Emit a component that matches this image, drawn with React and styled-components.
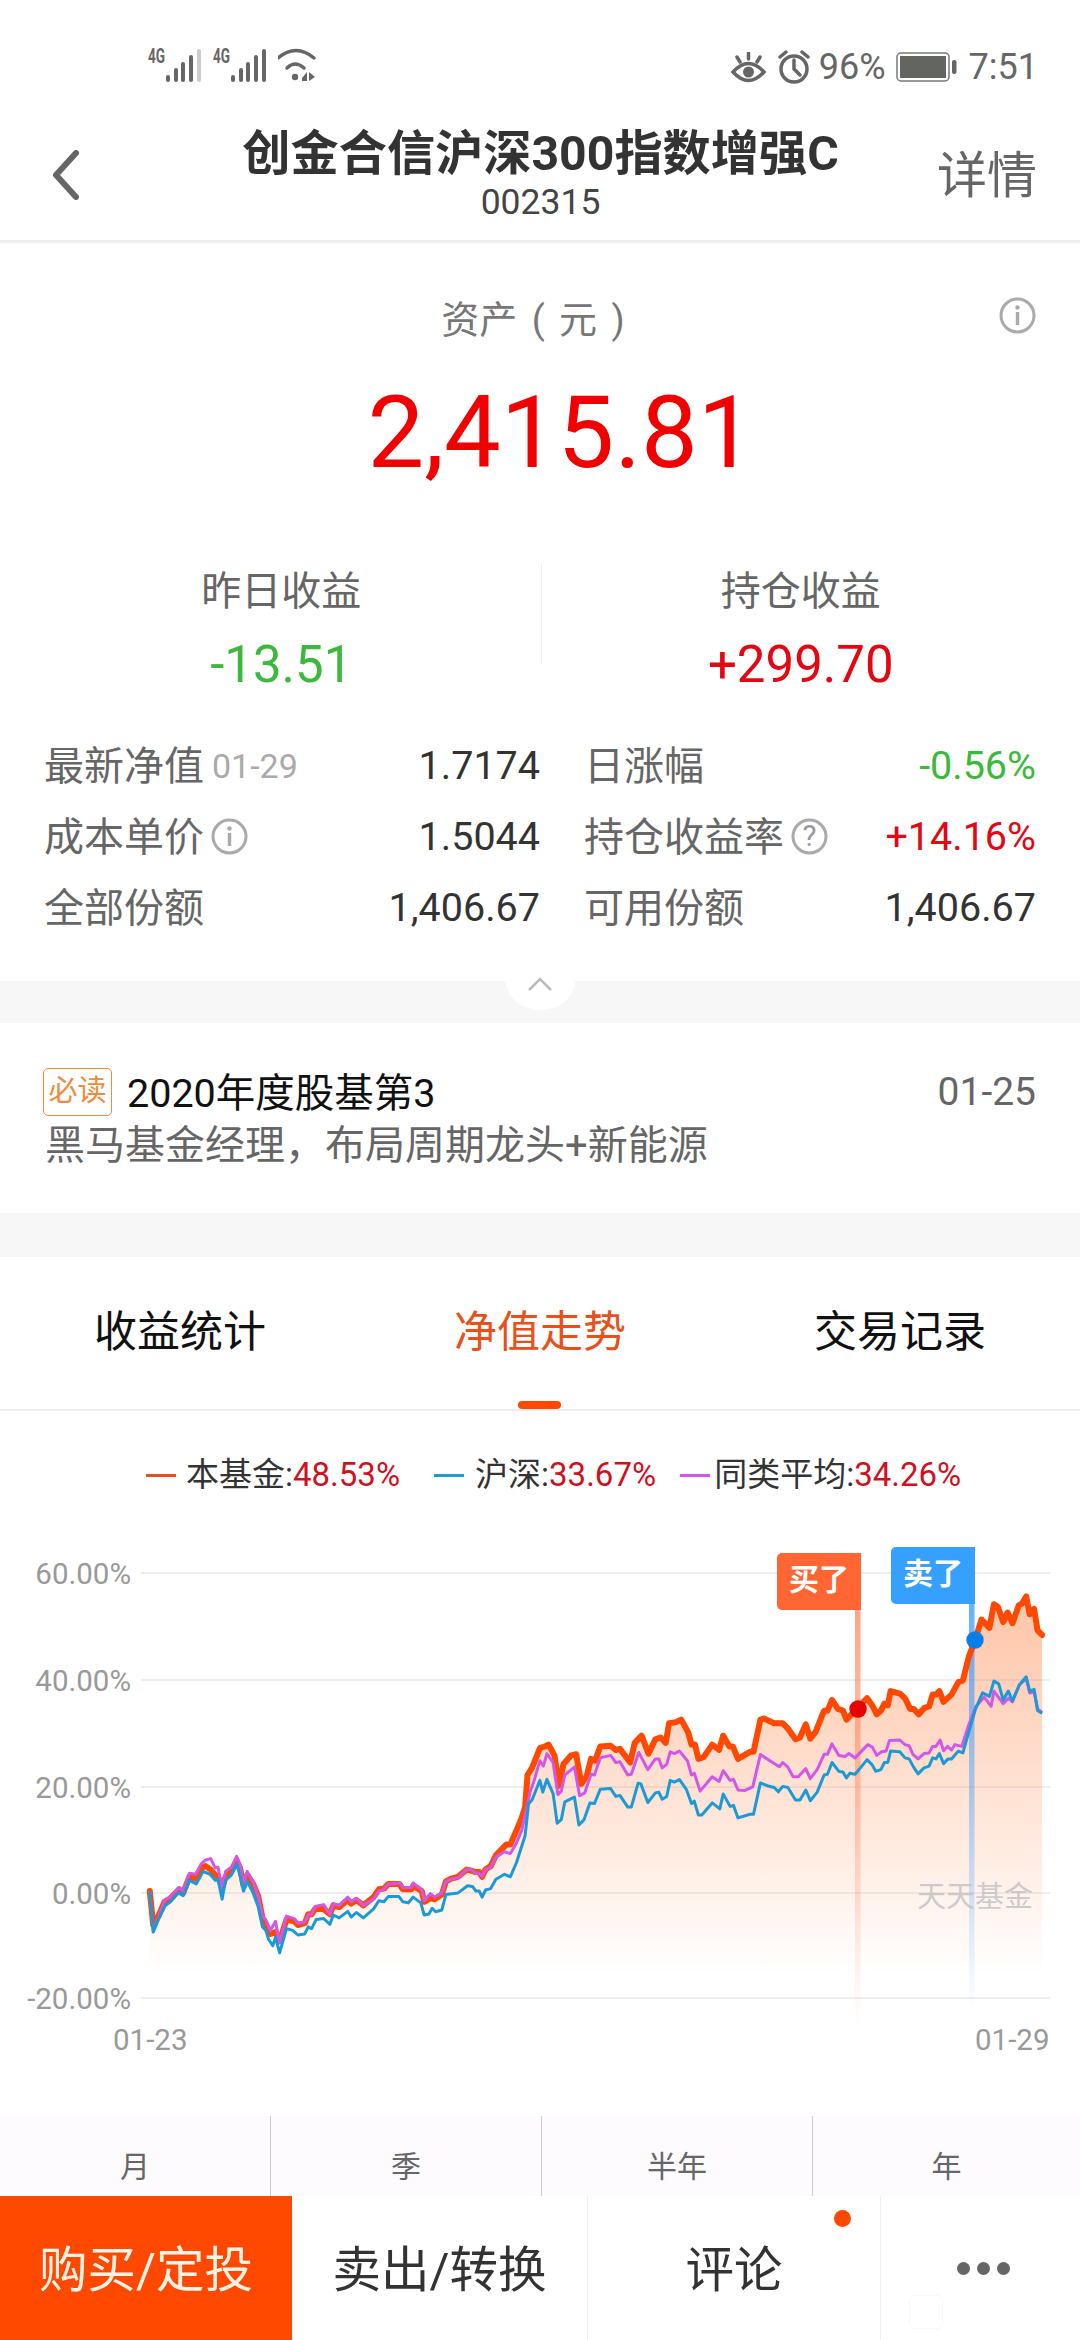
import React from 'react';
import styled, { createGlobalStyle } from 'styled-components';

const ORANGE = '#ff4800';
const RED = '#e30613';
const GREEN = '#3cb93c';

const STATS = [
  { label: '最新净值', date: '01-29', value: '1.7174' },
  { label: '日涨幅', value: '-0.56%', color: GREEN },
  { label: '成本单价', icon: 'i', value: '1.5044' },
  { label: '持仓收益率', icon: '?', value: '+14.16%', color: RED },
  { label: '全部份额', value: '1,406.67' },
  { label: '可用份额', value: '1,406.67' },
];

const LEGEND = [
  { name: '本基金', value: '48.53%', color: '#e8501a', gap: 10, left: 0 },
  { name: '沪深', value: '33.67%', color: '#1a9ad6', gap: 11, left: 34 },
  { name: '同类平均', value: '34.26%', color: '#d257e8', gap: 4, left: 24 },
];

const GRID = [
  { y: 1573, label: '60.00%' },
  { y: 1680, label: '40.00%' },
  { y: 1787, label: '20.00%' },
  { y: 1893, label: '0.00%' },
  { y: 1998, label: '-20.00%' },
];

// traced from the two halves of the chart, in crop coordinates
const ORANGE_L = '435,1095 445,1190 460,1165 478,1125 495,1115 520,1090 532,1100 550,1055 568,1060 585,1030 597,1025 612,1035 625,1050 633,1055 645,1085 655,1055 672,1040 687,1010 697,1030 707,1080 718,1050 735,1075 750,1110 762,1170 772,1190 785,1215 800,1210 812,1235 832,1175 855,1180 865,1190 885,1185 895,1160 905,1160 915,1145 940,1145 958,1160 968,1135 985,1140 1010,1120 1020,1130 1035,1120 1055,1135 1085,1112 1100,1090 1115,1088 1128,1075 1160,1075 1170,1090 1195,1090 1200,1080 1225,1095 1232,1125 1250,1115 1262,1118 1283,1105 1295,1068 1310,1060 1330,1055 1355,1035 1370,1038 1380,1042 1392,1042 1400,1055 1410,1035 1425,1025 1440,995 1470,965 1482,965 1500,925 1515,890 1525,860 1532,770 1545,750 1568,695';
const ORANGE_R = '15,690 25,685 42,715 55,800 68,740 90,715 105,712 120,795 135,775 148,725 160,730 175,690 205,688 220,700 232,697 262,735 275,680 295,660 315,710 335,670 350,665 365,680 375,625 395,622 410,615 430,650 440,685 450,685 460,725 475,720 500,685 520,700 532,660 550,690 560,690 575,725 610,705 620,705 640,615 650,612 680,625 705,625 720,640 742,670 755,665 772,628 785,668 800,650 825,590 835,590 848,560 865,585 880,590 890,615 905,600 925,580 950,555 965,575 978,600 990,590 1000,570 1010,575 1018,535 1045,542 1060,555 1075,585 1085,585 1100,600 1115,583 1130,578 1140,545 1150,545 1160,535 1172,565 1195,545 1215,510 1228,505 1245,440 1262,395 1282,335 1305,358 1318,292 1330,300 1345,342 1358,315 1372,345 1390,295 1400,290 1412,270 1422,320 1435,305 1445,365 1458,378';
const PURPLE_L = '435,1095 445,1205 460,1170 478,1120 495,1112 520,1085 532,1095 550,1045 568,1048 585,1018 597,1008 612,1004 625,1030 633,1028 645,1090 655,1040 672,1028 687,998 697,1020 707,1075 718,1040 735,1070 750,1110 762,1165 772,1175 785,1205 800,1180 812,1240 832,1165 855,1172 865,1185 885,1182 895,1162 905,1160 915,1138 940,1133 958,1160 968,1130 985,1135 1010,1112 1020,1125 1035,1115 1055,1135 1085,1118 1100,1095 1115,1090 1128,1075 1160,1072 1170,1085 1195,1085 1200,1072 1225,1092 1232,1122 1250,1102 1262,1112 1283,1100 1295,1068 1310,1062 1330,1058 1355,1035 1370,1035 1380,1045 1392,1045 1400,1055 1410,1035 1425,1028 1440,1000 1465,985 1482,990 1500,960 1515,925 1530,860 1540,815 1550,790 1568,730';
const PURPLE_R = '10,745 20,710 38,735 52,825 62,815 72,770 100,748 115,828 130,820 148,768 158,770 175,722 205,715 220,735 232,733 255,770 265,768 287,707 313,755 335,725 345,725 355,750 368,740 378,705 390,710 405,703 428,730 440,770 448,765 465,815 500,775 520,788 532,758 552,785 562,782 575,812 595,813 618,803 640,713 680,738 695,747 705,735 720,748 735,775 750,775 772,752 785,780 805,755 825,712 835,712 848,683 868,715 885,718 897,710 915,722 952,685 965,692 978,715 992,705 1005,703 1015,673 1045,672 1060,685 1072,688 1083,712 1098,725 1115,710 1130,708 1140,690 1150,690 1162,672 1172,702 1183,690 1195,700 1205,685 1225,690 1245,630 1265,580 1290,552 1310,578 1318,535 1345,570 1360,555 1372,565 1392,518 1412,500 1422,540 1435,538 1445,585 1458,595';
const BLUE_L = '435,1095 445,1210 460,1175 480,1135 495,1125 518,1100 532,1108 550,1065 570,1075 590,1040 610,1048 625,1065 633,1062 645,1118 655,1065 672,1050 687,1020 697,1050 707,1095 718,1068 735,1100 750,1140 762,1195 772,1205 780,1230 792,1248 800,1225 812,1268 832,1200 850,1205 865,1218 885,1215 895,1195 905,1200 918,1175 940,1172 958,1188 968,1162 985,1170 1010,1152 1020,1168 1035,1155 1055,1170 1085,1145 1100,1122 1115,1125 1128,1110 1158,1110 1170,1125 1185,1128 1200,1112 1222,1128 1232,1162 1245,1160 1255,1143 1265,1153 1283,1148 1295,1105 1330,1100 1358,1080 1372,1082 1382,1095 1392,1095 1400,1112 1410,1092 1425,1088 1440,1062 1465,1048 1482,1055 1500,1015 1525,940 1535,850 1545,840 1568,785';
const BLUE_R = '8,818 20,782 38,822 50,905 62,895 72,845 100,832 113,910 128,895 145,848 158,850 175,810 205,808 220,830 232,827 255,860 265,860 285,793 293,795 313,847 335,820 345,818 355,838 368,830 378,785 390,790 405,783 425,810 440,850 448,843 460,882 470,882 500,848 522,865 532,823 552,858 562,855 575,890 610,880 620,880 640,792 660,800 680,805 692,817 705,802 720,805 742,840 755,840 772,812 785,842 805,818 825,770 835,768 848,735 868,760 880,762 890,778 900,765 915,768 950,727 965,742 975,760 990,755 1000,735 1010,735 1018,703 1045,705 1060,722 1072,725 1085,748 1098,767 1115,750 1130,745 1140,722 1150,725 1160,710 1172,738 1185,725 1195,725 1215,703 1228,708 1245,650 1265,585 1285,540 1305,550 1318,507 1332,515 1345,560 1360,535 1372,562 1392,518 1412,495 1422,535 1435,530 1445,590 1458,597';

const SCALE_X = 2.904;
const SCALE_Y = 2.8;

const toPath = (left, right) => {
  const read = (text, offset) =>
    text.split(' ').map((pair) => {
      const [x, y] = pair.split(',').map(Number);
      return `${(offset + x / SCALE_X).toFixed(1)},${(1500 + y / SCALE_Y).toFixed(1)}`;
    });
  return [...read(left, 0), ...read(right, 540)].join(' ');
};

const ORANGE_LINE = toPath(ORANGE_L, ORANGE_R);
const PURPLE_LINE = toPath(PURPLE_L, PURPLE_R);
const BLUE_LINE = toPath(BLUE_L, BLUE_R);

const GlobalStyle = createGlobalStyle`
  html, body {
    margin: 0;
    padding: 0;
    background: #ffffff;
  }

  body {
    font-family: Roboto, "Noto Sans CJK SC", sans-serif;
  }
`;

const Page = styled.div`
  position: relative;
  width: 1080px;
  height: 2340px;
  overflow: hidden;
  background: #ffffff;
  display: flex;
  flex-direction: column;
`;

const StatusBar = styled.div`
  height: 100px;
  display: flex;
  align-items: flex-start;
  padding: 42px 42px 0 148px;
  box-sizing: border-box;
  color: #666666;
`;

const StatusLeft = styled.div`
  display: flex;
  align-items: center;
  gap: 10px;
  height: 42px;
`;

const StatusRight = styled.div`
  display: flex;
  align-items: center;
  gap: 9px;
  height: 36px;
  margin: 7px 0 0 auto;
`;

const StatusText = styled.span`
  font-size: 36px;
  line-height: 36px;
`;

const SignalLabel = styled.text`
  font-family: Roboto, sans-serif;
  font-size: 21px;
  font-weight: 700;
  fill: #666666;
`;

const Header = styled.header`
  height: 143px;
  box-sizing: border-box;
  border-bottom: 3px solid #eeeeee;
  display: grid;
  grid-template-columns: 1fr auto 1fr;
  padding: 0 43px 0 44px;
`;

const BackCell = styled.div`
  padding: 50px 0 0 8px;
`;

const TitleBlock = styled.div`
  text-align: center;
  padding-top: 26px;
`;

const Title = styled.div`
  font-size: 48.2px;
  line-height: 56px;
  font-weight: 700;
  color: #333333;
`;

const FundCode = styled.div`
  font-size: 35.5px;
  line-height: 40px;
  color: #444444;
`;

const DetailLink = styled.div`
  justify-self: end;
  padding-top: 46px;
  font-size: 50px;
  line-height: 60px;
  color: #666666;
`;

const Summary = styled.section`
  height: 738px;
  box-sizing: border-box;
  padding-top: 54px;
`;

const AssetHead = styled.div`
  display: grid;
  grid-template-columns: 1fr auto 1fr;
  padding-right: 44px;
`;

const AssetLabel = styled.div`
  grid-column: 2;
  font-size: 38px;
  line-height: 46px;
  word-spacing: 5px;
  color: #777777;
  margin-left: 30px;
`;

const AssetInfo = styled.div`
  grid-column: 3;
  justify-self: end;
  height: 37px;
`;

const AssetValue = styled.div`
  margin-top: 30px;
  padding-left: 42px;
  text-align: center;
  font-size: 101px;
  line-height: 120px;
  color: #f10000;
`;

const Pairs = styled.div`
  display: grid;
  grid-template-columns: 1fr 1px 1fr;
  padding: 0 20px 0 22px;
  margin-top: 70px;
`;

const PairCell = styled.div`
  text-align: center;
`;

const PairDivider = styled.div`
  height: 100px;
  background: #eeeeee;
`;

const PairLabel = styled.div`
  font-size: 40px;
  line-height: 58px;
  color: #666666;
`;

const PairValue = styled.div`
  font-size: 51px;
  line-height: 88px;
  color: ${(props) => props.$color};
`;

const StatsGrid = styled.div`
  display: grid;
  grid-template-columns: 495px 451px;
  grid-auto-rows: 71px;
  column-gap: 45px;
  padding: 0 44px 0 45px;
  margin-top: 21px;
`;

const StatRow = styled.div`
  display: flex;
  align-items: center;
`;

const StatLabel = styled.span`
  font-size: 40px;
  color: #666666;
  margin: 0 0 5px -1px;
`;

const StatDate = styled.span`
  font-size: 34px;
  color: #aaaaaa;
  margin-left: 8px;
`;

const StatIcon = styled.span`
  display: flex;
  margin-left: 7px;
`;

const StatValue = styled.span`
  margin-left: auto;
  font-size: 39.5px;
  color: ${(props) => props.$color || '#333333'};
`;

const GapBand = styled.div`
  position: relative;
  flex: none;
  height: ${(props) => props.$height}px;
  background: #f7f7f7;
`;

const CollapseTab = styled.div`
  position: absolute;
  top: 0;
  left: 506px;
  width: 69px;
  height: 29px;
  background: #ffffff;
  border-radius: 0 0 35px 35px / 0 0 29px 29px;
`;

const CollapseChevron = styled.svg`
  position: absolute;
  top: -5px;
  left: 20px;
`;

const Notice = styled.section`
  height: 190px;
  box-sizing: border-box;
  padding: 45px 44px 0 43px;
`;

const NoticeHead = styled.div`
  display: flex;
  align-items: center;
  height: 48px;
`;

const ReadBadge = styled.span`
  width: 69px;
  height: 48px;
  box-sizing: border-box;
  border: 1.5px solid #f08a3c;
  border-radius: 5px;
  color: #f08a3c;
  font-size: 29px;
  line-height: 44px;
  text-align: center;
`;

const NoticeTitle = styled.span`
  font-size: 39.5px;
  color: #111111;
  margin: 0 0 5px 15px;
`;

const NoticeDate = styled.span`
  margin-left: auto;
  font-size: 39px;
  color: #666666;
`;

const NoticeText = styled.div`
  margin: 5px 0 0 2px;
  font-size: 40px;
  line-height: 50px;
  color: #666666;
`;

const TabBar = styled.nav`
  height: 154px;
  box-sizing: border-box;
  border-bottom: 2px solid #eeeeee;
  display: grid;
  grid-template-columns: repeat(3, 1fr);
`;

const Tab = styled.div`
  position: relative;
  text-align: center;
  font-size: 43px;
  line-height: 150px;
  color: ${(props) => (props.$active ? '#e8501a' : '#111111')};

  ${(props) =>
    props.$active &&
    `
    &::after {
      content: '';
      position: absolute;
      left: 158px;
      bottom: 0;
      width: 43px;
      height: 8px;
      border-radius: 4px;
      background: ${ORANGE};
    }
  `}
`;

const Legend = styled.div`
  display: flex;
  align-items: center;
  height: 40px;
  padding: 44px 0 0 146px;
`;

const LegendItem = styled.div`
  display: flex;
  align-items: center;
  margin-left: ${(props) => props.$left}px;
  gap: ${(props) => props.$gap}px;
  font-size: 33px;
  line-height: 40px;
  color: #333333;
`;

const LegendSwatch = styled.span`
  width: 30px;
  height: 3px;
  background: ${(props) => props.$color};
`;

const LegendValue = styled.span`
  color: #d0101e;
`;

const ChartCanvas = styled.div`
  position: relative;
  flex: none;
  height: 621px;
`;

const ChartSvg = styled.svg`
  display: block;
`;

const AxisText = styled.text`
  font-family: Roboto, sans-serif;
  font-size: 29.5px;
  fill: #999999;
`;

const Watermark = styled.text`
  font-family: "Noto Sans CJK SC", sans-serif;
  font-size: 29px;
  fill: #c4c4c4;
  fill-opacity: 0.85;
`;

const TradeTag = styled.div`
  position: absolute;
  left: ${(props) => props.$left}px;
  top: ${(props) => props.$top}px;
  width: 84px;
  height: 57px;
  border-radius: 5px 0 0 5px;
  background: ${(props) => props.$color};
  color: #ffffff;
  font-size: 30px;
  font-weight: 700;
  line-height: 54px;
  text-align: center;
`;

const PeriodBar = styled.div`
  flex: none;
  height: 80px;
  display: grid;
  grid-template-columns: 270px 271px 271px 1fr;
  background: #fdfbfe;
`;

const PeriodCell = styled.div`
  border-left: ${(props) => (props.$first ? 'none' : '1px solid #cccccc')};
  text-align: center;
  font-size: 30px;
  line-height: 102px;
  color: #666666;
`;

const ActionBar = styled.div`
  flex: none;
  height: 144px;
  display: grid;
  grid-template-columns: 292px 295px 293px 200px;
  background: #ffffff;
`;

const ActionCell = styled.div`
  position: relative;
  display: flex;
  align-items: center;
  justify-content: center;
  box-sizing: border-box;
  padding: ${(props) => (props.$dots ? '0 0 0 6px' : '0 0 5px')};
  border-left: ${(props) => (props.$divider ? '1px solid #eeeeee' : 'none')};
  background: ${(props) => (props.$primary ? ORANGE : 'transparent')};
  color: ${(props) => (props.$primary ? '#fff3e6' : '#333333')};
  font-size: 48.5px;
  gap: 7px;
`;

const RedDot = styled.span`
  position: absolute;
  top: 14px;
  right: 29px;
  width: 17px;
  height: 17px;
  border-radius: 50%;
  background: ${ORANGE};
`;

const MoreDot = styled.span`
  width: 13px;
  height: 13px;
  border-radius: 50%;
  background: #666666;
`;

const SealMark = styled.span`
  position: absolute;
  left: 28px;
  top: 99px;
  width: 32px;
  height: 32px;
  border: 1px solid #f8f8f8;
  border-radius: 6px;
`;

function SignalIcon({ full }) {
  return (
    <svg width="55" height="42" viewBox="0 -6 55 42">
      <SignalLabel x="0" y="15" textLength="17" lengthAdjust="spacingAndGlyphs">
        4G
      </SignalLabel>
      <rect x="18" y="27" width="4" height="7" rx="2" fill="#666666" />
      <rect x="26" y="20" width="4" height="14" rx="2" fill="#666666" />
      <rect x="33" y="14" width="4" height="20" rx="2" fill="#666666" />
      <rect x="41" y="7" width="4" height="27" rx="2" fill="#666666" />
      <rect x="49" y="1" width="4" height="33" rx="2" fill={full ? '#666666' : '#cccccc'} />
    </svg>
  );
}

function WifiIcon() {
  return (
    <svg width="39" height="42" viewBox="2 -5 39 42" fill="none">
      <path d="M2 11 Q20 -4 38 11" stroke="#666666" strokeWidth="3.5" strokeLinecap="round" />
      <path d="M11 21 Q19 13 28 21" stroke="#666666" strokeWidth="3.5" strokeLinecap="round" />
      <circle cx="19" cy="30" r="3.2" fill="#666666" />
      <polygon points="26,31 31,25 31,34 26,34" fill="#666666" />
      <polygon points="33,25 39,30 33,34" fill="#666666" />
    </svg>
  );
}

function EyeIcon() {
  return (
    <svg width="38" height="31" viewBox="0 0 38 31" fill="none" stroke="#666666" strokeWidth="3.5" strokeLinecap="round">
      <path d="M2 20 Q17.5 3 33 20 Q17.5 37 2 20Z" />
      <circle cx="17.5" cy="20" r="5.5" fill="#666666" stroke="none" />
      <path d="M17.5 1 V7 M6 5 L9 10 M29 5 L26 10" />
    </svg>
  );
}

function AlarmIcon() {
  return (
    <svg width="32" height="34" viewBox="0 0 32 34" fill="none" stroke="#666666" strokeWidth="3.5" strokeLinecap="round">
      <circle cx="16" cy="19" r="13" />
      <path d="M16 10 V19 L22 25" />
      <path d="M2 7 L8 2 M30 7 L24 2" />
    </svg>
  );
}

function BatteryIcon() {
  return (
    <svg width="65" height="30" viewBox="-1 0 65 30">
      <rect x="1" y="1" width="52" height="28" rx="4" fill="none" stroke="#777777" strokeWidth="1.5" />
      <rect x="4" y="4" width="46" height="22" fill="#636561" />
      <rect x="56" y="8" width="4.5" height="14" rx="2" fill="#666666" />
    </svg>
  );
}

function BackIcon() {
  return (
    <svg width="28" height="50" viewBox="0 0 28 50" fill="none">
      <path d="M24 3 L4 25 L24 47" stroke="#666666" strokeWidth="6" strokeLinecap="round" strokeLinejoin="round" />
    </svg>
  );
}

function HintIcon({ mark }) {
  return (
    <svg width="37" height="37" viewBox="0 0 37 37" fill="none">
      <circle cx="18.5" cy="18.5" r="16.5" stroke="#aaaaaa" strokeWidth="3" />
      {mark === 'i' ? (
        <g fill="#aaaaaa">
          <circle cx="18.5" cy="10.5" r="2.2" />
          <rect x="16.8" y="15" width="3.4" height="13" />
        </g>
      ) : (
        <AxisText x="18.5" y="28" textAnchor="middle">
          ?
        </AxisText>
      )}
    </svg>
  );
}

function Chart() {
  const orangeArea = `150,1975 ${ORANGE_LINE} 1042,1975`;

  return (
    <ChartCanvas>
      <ChartSvg width="1080" height="621" viewBox="0 1495 1080 621">
        <defs>
          <linearGradient id="areaFill" gradientUnits="userSpaceOnUse" x1="0" y1="1630" x2="0" y2="1975">
            <stop offset="0" stopColor="#ff6a1f" stopOpacity="0.36" />
            <stop offset="1" stopColor="#ff6a1f" stopOpacity="0" />
          </linearGradient>
          <linearGradient id="buyFill" gradientUnits="userSpaceOnUse" x1="0" y1="1605" x2="0" y2="2025">
            <stop offset="0" stopColor="#ff6633" stopOpacity="0.6" />
            <stop offset="1" stopColor="#ff6633" stopOpacity="0" />
          </linearGradient>
          <linearGradient id="sellFill" gradientUnits="userSpaceOnUse" x1="0" y1="1600" x2="0" y2="2014">
            <stop offset="0" stopColor="#3d9eff" stopOpacity="0.8" />
            <stop offset="1" stopColor="#3d9eff" stopOpacity="0" />
          </linearGradient>
        </defs>

        {GRID.map((line) => (
          <g key={line.label}>
            <line x1="141" x2="1050" y1={line.y} y2={line.y} stroke="#eeeeee" strokeWidth="2" />
            <AxisText x="131" y={line.y + 11} textAnchor="end">
              {line.label}
            </AxisText>
          </g>
        ))}

        <AxisText x="113" y="2050">
          01-23
        </AxisText>
        <AxisText x="975" y="2050">
          01-29
        </AxisText>

        <polygon points={orangeArea} fill="url(#areaFill)" />
        <rect x="855" y="1605" width="5.5" height="420" fill="url(#buyFill)" />
        <rect x="969" y="1600" width="5.5" height="414" fill="url(#sellFill)" />

        <polyline points={ORANGE_LINE} fill="none" stroke={ORANGE} strokeWidth="6" strokeLinejoin="round" strokeLinecap="round" />
        <polyline points={PURPLE_LINE} fill="none" stroke="#d257e8" strokeWidth="3" strokeLinejoin="round" />
        <polyline points={BLUE_LINE} fill="none" stroke="#1a9ad6" strokeWidth="3" strokeLinejoin="round" />

        <circle cx="858" cy="1709" r="8.7" fill="#e60000" />
        <circle cx="975" cy="1640" r="8.7" fill="#0a7ee8" />

        <Watermark x="917" y="1907">
          天天基金
        </Watermark>
      </ChartSvg>

      <TradeTag $left={777} $top={58} $color="#ff6633">
        买了
      </TradeTag>
      <TradeTag $left={891} $top={52} $color="#35a0ff">
        卖了
      </TradeTag>
    </ChartCanvas>
  );
}

export default function App() {
  return (
    <Page>
      <GlobalStyle />

      <StatusBar>
        <StatusLeft>
          <SignalIcon />
          <SignalIcon full />
          <WifiIcon />
        </StatusLeft>
        <StatusRight>
          <EyeIcon />
          <AlarmIcon />
          <StatusText>96%</StatusText>
          <BatteryIcon />
          <StatusText>7:51</StatusText>
        </StatusRight>
      </StatusBar>

      <Header>
        <BackCell>
          <BackIcon />
        </BackCell>
        <TitleBlock>
          <Title>创金合信沪深300指数增强C</Title>
          <FundCode>002315</FundCode>
        </TitleBlock>
        <DetailLink>详情</DetailLink>
      </Header>

      <Summary>
        <AssetHead>
          <AssetLabel>资产 ( 元 )</AssetLabel>
          <AssetInfo>
            <HintIcon mark="i" />
          </AssetInfo>
        </AssetHead>
        <AssetValue>2,415.81</AssetValue>

        <Pairs>
          <PairCell>
            <PairLabel>昨日收益</PairLabel>
            <PairValue $color={GREEN}>-13.51</PairValue>
          </PairCell>
          <PairDivider />
          <PairCell>
            <PairLabel>持仓收益</PairLabel>
            <PairValue $color={RED}>+299.70</PairValue>
          </PairCell>
        </Pairs>

        <StatsGrid>
          {STATS.map((stat) => (
            <StatRow key={stat.label}>
              <StatLabel>{stat.label}</StatLabel>
              {stat.date && <StatDate>{stat.date}</StatDate>}
              {stat.icon && (
                <StatIcon>
                  <HintIcon mark={stat.icon} />
                </StatIcon>
              )}
              <StatValue $color={stat.color}>{stat.value}</StatValue>
            </StatRow>
          ))}
        </StatsGrid>
      </Summary>

      <GapBand $height={42}>
        <CollapseTab>
          <CollapseChevron width="28" height="18" viewBox="0 0 28 18" fill="none">
            <path d="M3 14 L14 3 L25 14" stroke="#bbbbbb" strokeWidth="2.5" />
          </CollapseChevron>
        </CollapseTab>
      </GapBand>

      <Notice>
        <NoticeHead>
          <ReadBadge>必读</ReadBadge>
          <NoticeTitle>2020年度股基第3</NoticeTitle>
          <NoticeDate>01-25</NoticeDate>
        </NoticeHead>
        <NoticeText>黑马基金经理，布局周期龙头+新能源</NoticeText>
      </Notice>

      <GapBand $height={44} />

      <TabBar>
        <Tab>收益统计</Tab>
        <Tab $active>净值走势</Tab>
        <Tab>交易记录</Tab>
      </TabBar>

      <Legend>
        {LEGEND.map((item) => (
          <LegendItem key={item.name} $gap={item.gap} $left={item.left}>
            <LegendSwatch $color={item.color} />
            <span>
              {item.name}:<LegendValue>{item.value}</LegendValue>
            </span>
          </LegendItem>
        ))}
      </Legend>

      <Chart />

      <PeriodBar>
        <PeriodCell $first>月</PeriodCell>
        <PeriodCell>季</PeriodCell>
        <PeriodCell>半年</PeriodCell>
        <PeriodCell>年</PeriodCell>
      </PeriodBar>

      <ActionBar>
        <ActionCell $primary>购买/定投</ActionCell>
        <ActionCell>卖出/转换</ActionCell>
        <ActionCell $divider>
          评论
          <RedDot />
        </ActionCell>
        <ActionCell $divider $dots>
          <MoreDot />
          <MoreDot />
          <MoreDot />
          <SealMark />
        </ActionCell>
      </ActionBar>
    </Page>
  );
}
